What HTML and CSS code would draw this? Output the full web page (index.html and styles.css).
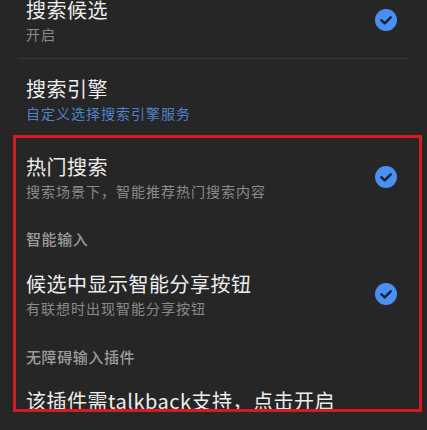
FILE: index.html
```html
<!DOCTYPE html>
<html lang="zh-CN">
<head>
<meta charset="utf-8">
<title>设置</title>
<link rel="stylesheet" href="styles.css">
</head>
<body>
<div class="list">
  <div class="row row-first">
    <div class="text">
      <div class="title">搜索候选</div>
      <div class="sub">开启</div>
    </div>
    <svg class="check" viewBox="0 0 22 22" width="22" height="22"><circle cx="11" cy="11" r="11" fill="#4a8ff2"/><path d="M6.3 11.2 L9.7 14.4 L15.7 8.3" fill="none" stroke="#16233a" stroke-width="2.4" stroke-linecap="round" stroke-linejoin="round"/></svg>
  </div>
  <div class="divider"></div>
  <div class="row row-second">
    <div class="text">
      <div class="title">搜索引擎</div>
      <div class="sub link">自定义选择搜索引擎服务</div>
    </div>
  </div>
  <div class="row row-hot">
    <div class="text">
      <div class="title">热门搜索</div>
      <div class="sub">搜索场景下，智能推荐热门搜索内容</div>
    </div>
    <svg class="check" viewBox="0 0 22 22" width="22" height="22"><circle cx="11" cy="11" r="11" fill="#4a8ff2"/><path d="M6.3 11.2 L9.7 14.4 L15.7 8.3" fill="none" stroke="#16233a" stroke-width="2.4" stroke-linecap="round" stroke-linejoin="round"/></svg>
  </div>
  <div class="header header-smart">智能输入</div>
  <div class="row row-share">
    <div class="text">
      <div class="title">候选中显示智能分享按钮</div>
      <div class="sub">有联想时出现智能分享按钮</div>
    </div>
    <svg class="check" viewBox="0 0 22 22" width="22" height="22"><circle cx="11" cy="11" r="11" fill="#4a8ff2"/><path d="M6.3 11.2 L9.7 14.4 L15.7 8.3" fill="none" stroke="#16233a" stroke-width="2.4" stroke-linecap="round" stroke-linejoin="round"/></svg>
  </div>
  <div class="header header-access">无障碍输入插件</div>
  <div class="row row-talk">
    <div class="text">
      <div class="title">该插件需talkback支持，点击开启</div>
    </div>
  </div>
</div>
<div class="highlight"></div>
</body>
</html>
```
FILE: styles.css
```css
html, body {
  margin: 0;
  padding: 0;
}
body {
  background: #262626;
  width: 427px;
  height: 430px;
  overflow: hidden;
  position: relative;
  font-family: "Noto Sans CJK SC", "Noto Sans", sans-serif;
}
.list {
  margin-top: -4px;
}
.row {
  display: flex;
  align-items: center;
  padding: 0 30px 0 26px;
}
.text {
  flex: 1;
  min-width: 0;
}
.title {
  color: #eeeeee;
  font-size: 20px;
  line-height: 28px;
  letter-spacing: 0.5px;
  white-space: nowrap;
}
.sub {
  color: #8a8a8a;
  font-size: 14px;
  line-height: 20px;
  letter-spacing: 1px;
  white-space: nowrap;
}
.sub.link {
  color: #4d82cc;
}
.check {
  flex: none;
  display: block;
}
.row-first {
  padding-bottom: 14px;
}
.divider {
  height: 1px;
  background: #383838;
  margin: 0 19px 0 18px;
}
.row-second {
  padding-top: 16px;
}
.row-hot {
  margin-top: 30px;
}
.header {
  color: #9c9c9c;
  font-size: 15px;
  line-height: 20px;
  letter-spacing: 0.6px;
  font-weight: 500;
  padding-left: 26px;
}
.header-smart {
  margin-top: 28px;
}
.row-share {
  margin-top: 21px;
}
.header-access {
  margin-top: 29px;
}
.row-talk {
  margin-top: 20px;
}
.highlight {
  position: absolute;
  left: 13px;
  top: 135px;
  width: 403px;
  height: 271px;
  border: 3px solid #d41b1f;
}
```
